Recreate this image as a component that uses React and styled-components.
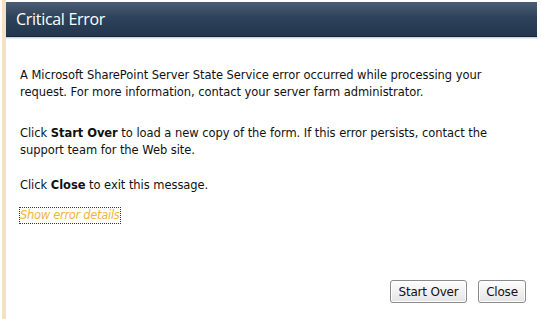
import React from 'react';
import styled, { createGlobalStyle } from 'styled-components';

const GlobalStyle = createGlobalStyle`
  html, body {
    margin: 0;
    padding: 0;
    background: #ffffff;
  }
`;

const Page = styled.div`
  width: 541px;
  height: 319px;
  padding-left: 2px;
  box-sizing: border-box;
  display: flex;
  background: #ffffff;
  overflow: hidden;
`;

const Dialog = styled.div`
  flex: 1;
  display: flex;
  flex-direction: column;
  border-left: 4px solid #f3e3c6;
  padding-top: 2px;
  padding-right: 4px;
`;

const TitleBar = styled.div`
  height: 34px;
  display: flex;
  align-items: center;
  padding-left: 10px;
  background: linear-gradient(to bottom, #4a5e74 0%, #2e435b 45%, #22364e 100%);
  border-bottom: 1px solid #16263a;
  box-shadow: 0 1px 0 #c9d5e1, 0 2px 0 #e6ecf2;
`;

const Title = styled.h1`
  margin: 0;
  font-family: "Open Sans", "DejaVu Sans", sans-serif;
  font-weight: 400;
  font-size: 16px;
  letter-spacing: -0.3px;
  color: #ffffff;
`;

const Body = styled.div`
  flex: 1;
  display: flex;
  flex-direction: column;
  padding: 30px 0 0 14px;
  font-family: "DejaVu Sans", sans-serif;
  font-size: 11.5px;
  letter-spacing: -0.05px;
  line-height: 17px;
  color: #111111;
`;

const Para = styled.p`
  margin: 0 0 ${p => p.$gap}px 0;
  white-space: nowrap;
`;

const DetailsLink = styled.a`
  align-self: flex-start;
  margin-left: -1px;
  padding: 0 1px;
  font-style: italic;
  color: #f2b53c;
  text-decoration: none;
  outline: 1px dotted #333;
  outline-offset: -1px;
  letter-spacing: -0.3px;
`;

const Footer = styled.div`
  margin-top: auto;
  display: flex;
  justify-content: flex-end;
  gap: 11px;
  padding: 0 11px 16px 0;
`;

const Button = styled.button`
  height: 23px;
  width: ${p => p.$w}px;
  padding: 0;
  border: 1px solid #8a8a8a;
  border-radius: 3px;
  background: linear-gradient(to bottom, #fdfdfd 0%, #f1f1f1 50%, #e4e4e4 100%);
  box-shadow: inset 0 0 0 1px #ffffff;
  font-family: "DejaVu Sans", sans-serif;
  font-size: 12px;
  letter-spacing: -0.2px;
  color: #111;
`;

export default function App() {
  return (
    <>
      <GlobalStyle />
      <Page>
        <Dialog>
          <TitleBar>
            <Title>Critical Error</Title>
          </TitleBar>
          <Body>
            <Para $gap={24}>
              A Microsoft SharePoint Server State Service error occurred while processing your
              <br />
              request. For more information, contact your server farm administrator.
            </Para>
            <Para $gap={18}>
              Click <b>Start Over</b> to load a new copy of the form. If this error persists, contact the
              <br />
              support team for the Web site.
            </Para>
            <Para $gap={13}>
              Click <b>Close</b> to exit this message.
            </Para>
            <DetailsLink href="#">Show error details</DetailsLink>
          </Body>
          <Footer>
            <Button $w={77}>Start Over</Button>
            <Button $w={48}>Close</Button>
          </Footer>
        </Dialog>
      </Page>
    </>
  );
}
